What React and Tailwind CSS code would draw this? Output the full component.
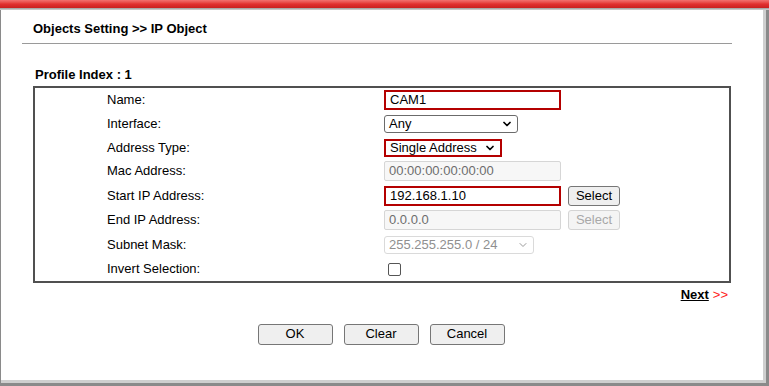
import React from 'react';
import { ChevronDown } from 'lucide-react';

const rows = [
    { label: 'Name:', h: 'h-[24px]', control: 'name' },
    { label: 'Interface:', h: 'h-[24px]', control: 'iface' },
    { label: 'Address Type:', h: 'h-[23px]', control: 'type' },
    { label: 'Mac Address:', h: 'h-[24px]', control: 'mac' },
    { label: 'Start IP Address:', h: 'h-[25px]', control: 'start' },
    { label: 'End IP Address:', h: 'h-[24px]', control: 'end' },
    { label: 'Subnet Mask:', h: 'h-[25px]', control: 'mask' },
    { label: 'Invert Selection:', h: 'h-[24px]', control: 'invert' },
];

function TextBox({ value, highlight, disabled }) {
    if (highlight) {
        return (
            <div className="w-[177px] h-[20px] border-2 border-[#b40000] bg-white flex items-center pl-[4px] text-[13px] text-black">
                {value}
            </div>
        );
    }
    return (
        <div className={`w-[177px] h-[20px] border border-[#d6d6d6] rounded-[2px] flex items-center pl-[4px] text-[13px] ${disabled ? 'bg-[#f7f7f7] text-[#6d6d6d]' : 'bg-white text-black'}`}>
            {value}
        </div>
    );
}

function SelectBox({ value, width, highlight, disabled }) {
    const border = highlight
        ? 'border-2 border-[#b40000]'
        : disabled
            ? 'border border-[#dadada] rounded-[3px]'
            : 'border border-[#6b6b6b] rounded-[3px]';
    return (
        <div className={`${width} h-[18px] ${border} bg-white flex items-center justify-between pl-[4px] pr-[4px] text-[13px] ${disabled ? 'text-[#8f8f8f]' : 'text-black'}`}>
            <span>{value}</span>
            <ChevronDown size={12} strokeWidth={disabled ? 2 : 3.5} className={disabled ? 'text-[#9a9a9a]' : 'text-black'} />
        </div>
    );
}

function SmallButton({ children, disabled }) {
    return (
        <div className={`w-[52px] h-[20px] rounded-[3px] flex items-center justify-center text-[13px] ${disabled ? 'bg-[#f4f4f4] border border-[#d4d4d4] text-[#a8a8a8]' : 'bg-[#efefef] border border-[#767676] text-black'}`}>
            {children}
        </div>
    );
}

function Control({ kind }) {
    switch (kind) {
        case 'name':
            return <TextBox value="CAM1" highlight />;
        case 'iface':
            return <SelectBox value="Any" width="w-[134px]" />;
        case 'type':
            return <SelectBox value="Single Address" width="w-[118px]" highlight />;
        case 'mac':
            return <TextBox value="00:00:00:00:00:00" disabled />;
        case 'start':
            return (
                <div className="flex items-center gap-[7px]">
                    <TextBox value="192.168.1.10" highlight />
                    <SmallButton>Select</SmallButton>
                </div>
            );
        case 'end':
            return (
                <div className="flex items-center gap-[7px]">
                    <TextBox value="0.0.0.0" disabled />
                    <SmallButton disabled>Select</SmallButton>
                </div>
            );
        case 'mask':
            return <SelectBox value="255.255.255.0 / 24" width="w-[150px]" disabled />;
        case 'invert':
            return <div className="ml-[4px] w-[13px] h-[13px] border border-[#555] rounded-[2px] bg-white" />;
        default:
            return null;
    }
}

function ActionButton({ children }) {
    return (
        <div className="w-[75px] h-[21px] bg-[#efefef] border border-[#767676] rounded-[3px] flex items-center justify-center text-[13px] text-black">
            {children}
        </div>
    );
}

export default function App() {
    return (
        <div className="w-[769px] h-[386px] bg-white flex flex-col overflow-hidden font-['Liberation_Sans',Arial,sans-serif]">
            {/* Top red bar */}
            <div className="h-[8px] bg-gradient-to-b from-[#f27070] via-[#e23030] to-[#c92020]" />
            <div className="h-[2px] bg-gradient-to-b from-[#9a9a9a] to-[#d6d6d6]" />

            {/* Frame with shadow on right/bottom */}
            <div className="flex-1 flex border-l border-[#8a8a8a] border-r-[3px] border-b-[3px] border-r-[#8a8a8a] border-b-[#8a8a8a]">
                <div className="flex-1 flex flex-col border-r-[3px] border-b-[3px] border-[#cfcfcf]">
                    <div className="pl-[32px] pt-[9px] h-[33px] text-[13px] font-bold text-black">
                        Objects Setting &gt;&gt; IP Object
                    </div>
                    <div className="ml-[21px] w-[710px] h-[1px] bg-[#9a9a9a]" />

                    <div className="pl-[34px] pt-[21px] h-[42px] text-[13px] font-bold text-black">
                        Profile Index : 1
                    </div>

                    <div className="ml-[32px] w-[698px] border-2 border-[#505050] flex flex-col">
                        {rows.map(row => (
                            <div key={row.label} className={`${row.h} flex items-center`}>
                                <div className="w-[349px] pl-[72px] text-[13px] text-black">{row.label}</div>
                                <Control kind={row.control} />
                            </div>
                        ))}
                    </div>

                    <div className="w-[729px] ml-[1px] pt-[2px] flex justify-end items-center text-[13px] gap-[4px] pr-[3px]">
                        <span className="font-bold text-black underline">Next</span>
                        <span className="text-[#ff2020]">&gt;&gt;</span>
                    </div>

                    <div className="pt-[19px] flex justify-center gap-[11px] pr-[2px]">
                        <ActionButton>OK</ActionButton>
                        <ActionButton>Clear</ActionButton>
                        <ActionButton>Cancel</ActionButton>
                    </div>
                </div>
            </div>
        </div>
    );
}
